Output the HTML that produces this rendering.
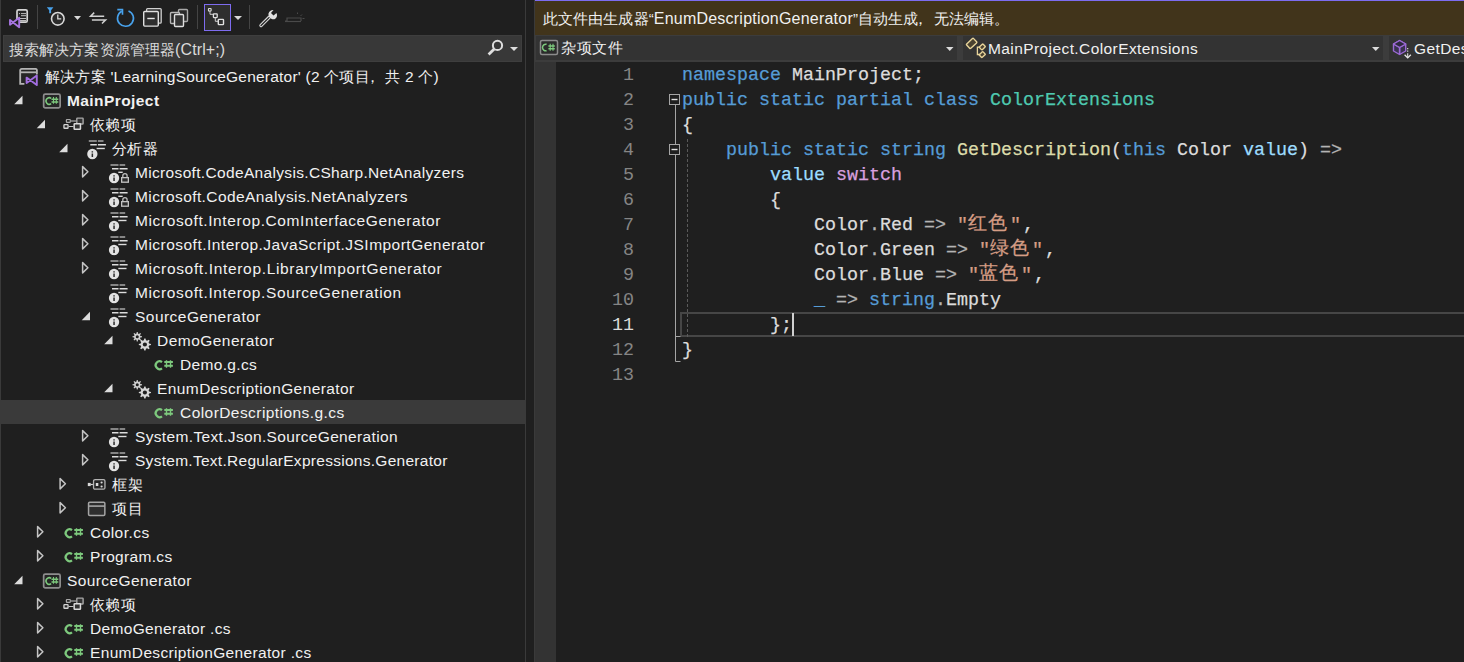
<!DOCTYPE html>
<html><head><meta charset="utf-8"><style>
*{margin:0;padding:0;box-sizing:border-box}
html,body{width:1464px;height:662px;overflow:hidden;background:#1f1f1f}
body{position:relative;font-family:"Liberation Sans", sans-serif;color:#f0f0f0}
.a{position:absolute}
.t{position:absolute;white-space:nowrap;font-size:15.5px;line-height:24px;color:#f1f1f1}
.cj{font-size:15px}
svg{position:absolute;overflow:visible}
.code{position:absolute;white-space:pre;font-family:"Liberation Mono", monospace;font-size:18.33px;line-height:25px;color:#dcdcdc;-webkit-text-stroke:0.25px currentColor}
.ln{position:absolute;white-space:pre;font-family:"Liberation Mono", monospace;font-size:18.33px;line-height:25px;color:#8e8e8e;text-align:right;width:60px}
.k{color:#569cd6} .ty{color:#4ec9b0} .m{color:#dcdcaa} .p{color:#9cdcfe} .sw{color:#d8a0df} .s{color:#d69d85}
.op{color:#b4b4b4}
.cq{position:relative;left:-2px}
.fc{position:relative;left:-5px}
.zh{font-size:19px;letter-spacing:1px;padding-right:4px;position:relative;top:-1px}
</style></head>
<body>
<div class="a" style="left:0;top:0;width:525px;height:662px;background:#1f1f1f"></div>
<div class="a" style="left:0;top:0;width:1px;height:662px;background:#3a3a3a"></div>
<div class="a" style="left:525px;top:0;width:1px;height:662px;background:#3a3a3a"></div>
<svg style="left:0;top:0" width="320" height="35">
 <!-- vs + doc -->
 <rect x="17" y="9.8" width="10.2" height="12.4" rx="1.5" fill="#262626" stroke="#d4d4d4" stroke-width="1.7"/>
 <path d="M21 13.6h5M21 15.7h5M20 18.5h6M20 20.5h6" stroke="#bdbdbd" stroke-width="1"/>
 <circle cx="19.5" cy="13.6" r="0.6" fill="#d0d0d0"/>
 <path d="M10 19.9L19.2 27.2V17.8L10 24.7z" fill="#1f1f1f" stroke="#a775e0" stroke-width="1.9" stroke-linejoin="round"/>
 <rect x="37" y="5" width="1" height="24" fill="#444"/>
 <!-- filter + clock -->
 <path d="M46.8 7.2h6.6l-2.3 3v3h-1.9v-3z" fill="#48a2ec"/>
 <circle cx="57.8" cy="18.8" r="6.3" fill="#2b2b2b" stroke="#d8d8d8" stroke-width="1.6"/>
 <path d="M57.8 14.5v4.3h3.4" fill="none" stroke="#d8d8d8" stroke-width="1.3"/>
 <path d="M74 16h7l-3.5 4z" fill="#d8d8d8"/>
 <!-- sync arrows -->
 <path d="M104.2 16.2H90.6l3.6-3.6M91.9 19.9H105.6l-3.6 3.6" fill="none" stroke="#d0d0d0" stroke-width="1.5"/>
 <!-- refresh -->
 <path d="M121.8 11.2A8 8 0 1 0 128.5 10.9" fill="none" stroke="#48a2ec" stroke-width="1.6"/>
 <path d="M117.3 9.6h5.2v5.2" fill="none" stroke="#48a2ec" stroke-width="1.6"/>
 <!-- collapse all -->
 <rect x="146.6" y="8.6" width="14.6" height="14.6" rx="1" fill="#2a2a2a" stroke="#cfcfcf" stroke-width="1.3"/>
 <rect x="143.7" y="11.5" width="14.6" height="14.6" rx="1" fill="#2e2e2e" stroke="#e0e0e0" stroke-width="1.4"/>
 <path d="M147.3 18.5h7.4" stroke="#e8e8e8" stroke-width="1.4"/>
 <!-- copy icon -->
 <rect x="178.5" y="9.5" width="9" height="12" rx="1" fill="#2a2a2a" stroke="#a8a8a8" stroke-width="1.4"/>
 <rect x="170.5" y="12.5" width="9" height="11" rx="1" fill="#262626" stroke="#b8b8b8" stroke-width="1.4"/>
 <rect x="174.5" y="14.5" width="9" height="12" rx="1" fill="#333" stroke="#e0e0e0" stroke-width="1.4"/>
 <rect x="197" y="5" width="1" height="24" fill="#444"/>
 <!-- selected button -->
 <rect x="204.5" y="4.5" width="26" height="26" fill="#2e2e2e" stroke="#7e6cf0" stroke-width="1"/>
 <rect x="208.5" y="8.5" width="2.6" height="2.6" rx="0.5" fill="none" stroke="#d8d8d8" stroke-width="1.2"/>
 <path d="M210 11.5v2.8h3" fill="none" stroke="#cfcfcf" stroke-width="1"/>
 <rect x="213.4" y="13.8" width="3.8" height="3.8" rx="0.5" fill="none" stroke="#e0e0e0" stroke-width="1.3"/>
 <path d="M215.3 17.8v3.5h3" fill="none" stroke="#cfcfcf" stroke-width="1"/>
 <rect x="218.3" y="19.4" width="5.2" height="5.2" rx="0.6" fill="none" stroke="#e0e0e0" stroke-width="1.4"/>
 <path d="M234 16h8l-4 4z" fill="#d8d8d8"/>
 <rect x="249" y="5" width="1" height="24" fill="#444"/>
 <!-- wrench -->
 <path d="M261 25.5l8.2-8.2" stroke="#d8d8d8" stroke-width="3.4" stroke-linecap="round"/>
 <path d="M261 25.5l8.2-8.2" stroke="#1f1f1f" stroke-width="1.2" stroke-linecap="round"/>
 <path d="M268.5 13.5a5 5 0 0 0 6.5 5.5 a5 5 0 0 0 1.5-6l-3 2.5-2.5-2.5 2.5-3a5 5 0 0 0-5 3.5z" fill="#e0e0e0"/>
 <!-- dim icon -->
 <path d="M285 21h2v-3h14v3" fill="none" stroke="#4a4a4a" stroke-width="1.2"/>
 <path d="M285 21.5h16" stroke="#4a4a4a" stroke-width="1.2"/>
 <path d="M297.5 12.5v1.5M302 14.5l-1.5 1.5M304.5 18.5h-2" stroke="#4a4a4a" stroke-width="1"/>
</svg>
<div class="a" style="left:3px;top:35px;width:519px;height:27px;background:#383838;border:1px solid #3e3e3e"></div>
<div class="t cj" style="left:9px;top:37px;line-height:25px;color:#dadada;letter-spacing:0.1px">搜索解决方案资源管理器<span style="font-size:16px">(Ctrl+;)</span></div>
<svg style="left:480px;top:35px" width="42" height="27">
 <circle cx="17.5" cy="10.4" r="4.6" fill="none" stroke="#dedede" stroke-width="2"/>
 <path d="M14.2 13.9L8.6 19.5" stroke="#dedede" stroke-width="2.8"/>
 <path d="M30 12h8l-4 4z" fill="#dedede"/>
</svg>
<div class="a" style="left:1px;top:400px;width:524px;height:24px;background:#3a3a3a"></div>
<div class="t" style="left:45px;top:65px;letter-spacing:0.218px"><span class="cj">解决方案</span> &#39;LearningSourceGenerator&#39; (2 <span class="cj">个项目<span class="fc">，</span>共</span> 2 <span class="cj">个</span>)</div>
<div class="t" style="left:67px;top:89px;letter-spacing:0.419px;font-weight:bold">MainProject</div>
<div class="t" style="left:90px;top:113px;letter-spacing:0.4px"><span class="cj">依赖项</span></div>
<div class="t" style="left:112px;top:137px;letter-spacing:0.4px"><span class="cj">分析器</span></div>
<div class="t" style="left:135px;top:161px;letter-spacing:0.332px">Microsoft.CodeAnalysis.CSharp.NetAnalyzers</div>
<div class="t" style="left:135px;top:185px;letter-spacing:0.417px">Microsoft.CodeAnalysis.NetAnalyzers</div>
<div class="t" style="left:135px;top:209px;letter-spacing:0.602px">Microsoft.Interop.ComInterfaceGenerator</div>
<div class="t" style="left:135px;top:233px;letter-spacing:0.479px">Microsoft.Interop.JavaScript.JSImportGenerator</div>
<div class="t" style="left:135px;top:257px;letter-spacing:0.661px">Microsoft.Interop.LibraryImportGenerator</div>
<div class="t" style="left:135px;top:281px;letter-spacing:0.624px">Microsoft.Interop.SourceGeneration</div>
<div class="t" style="left:135px;top:305px;letter-spacing:0.468px">SourceGenerator</div>
<div class="t" style="left:157px;top:329px;letter-spacing:0.472px">DemoGenerator</div>
<div class="t" style="left:180px;top:353px;letter-spacing:0.341px">Demo.g.cs</div>
<div class="t" style="left:157px;top:377px;letter-spacing:0.409px">EnumDescriptionGenerator</div>
<div class="t" style="left:180px;top:401px;letter-spacing:0.437px">ColorDescriptions.g.cs</div>
<div class="t" style="left:135px;top:425px;letter-spacing:0.342px">System.Text.Json.SourceGeneration</div>
<div class="t" style="left:135px;top:449px;letter-spacing:0.277px">System.Text.RegularExpressions.Generator</div>
<div class="t" style="left:112px;top:473px;letter-spacing:0.533px"><span class="cj">框架</span></div>
<div class="t" style="left:112px;top:497px;letter-spacing:1.066px"><span class="cj">项目</span></div>
<div class="t" style="left:90px;top:521px;letter-spacing:0.453px">Color.cs</div>
<div class="t" style="left:90px;top:545px;letter-spacing:0.326px">Program.cs</div>
<div class="t" style="left:67px;top:569px;letter-spacing:0.387px">SourceGenerator</div>
<div class="t" style="left:90px;top:593px;letter-spacing:0.4px"><span class="cj">依赖项</span></div>
<div class="t" style="left:90px;top:617px;letter-spacing:0.333px">DemoGenerator .cs</div>
<div class="t" style="left:90px;top:641px;letter-spacing:0.342px">EnumDescriptionGenerator .cs</div>
<svg style="left:0;top:0" width="525" height="662"><g><path d="M24.4 83.8H20.2V70a1.5 1.5 0 0 1 1.5-1.1h14a1.5 1.5 0 0 1 1.2 1.1V74.5" fill="#262626" stroke="#b4b4b4" stroke-width="1.8"/><path d="M20.2 72.3h16.7" stroke="#b4b4b4" stroke-width="1.8"/><path d="M26.6 77.6L36.8 85.1V75.6L26.6 83z" fill="#262626" stroke="#a26ee0" stroke-width="1.9" stroke-linejoin="round"/></g><path d="M22.50 95.8V104.3H14.20z" fill="#dcdcdc"/><g transform="translate(40.0,88)"><rect x="3.65" y="6.15" width="16.5" height="13.7" rx="1.6" fill="#262626" stroke="#8e8e8e" stroke-width="1.7"/><path d="M11.16 10.34A3.25 3.25 0 1 0 11.16 15.66" fill="none" stroke="#7dc97d" stroke-width="1.5"/><path d="M11.5 11.2h6.8M11.5 14h6.8" stroke="#7dc97d" stroke-width="1.6"/><path d="M13.5 9v6.7M16.3 9v6.7" stroke="#7dc97d" stroke-width="1.1"/></g><path d="M45.00 119.8V128.3H36.70z" fill="#dcdcdc"/><g transform="translate(62.5,112)"><path d="M6.2 14.5h4.7M8.4 9h5.2" stroke="#c8c8c8" stroke-width="1.2"/><rect x="1.45" y="12.65" width="4.1" height="3.6" rx="0.6" fill="#2a2a2a" stroke="#d4d4d4" stroke-width="1.3"/><rect x="3.9" y="7.5" width="3.9" height="2.9" rx="0.6" fill="#2a2a2a" stroke="#a8a8a8" stroke-width="1.2"/><rect x="14.3" y="6.1" width="6.3" height="5.9" rx="0.6" fill="#333" stroke="#a8a8a8" stroke-width="1.4"/><rect x="11.65" y="11.65" width="6.3" height="5.6" rx="0.6" fill="#333" stroke="#dcdcdc" stroke-width="1.5"/></g><path d="M67.50 143.8V152.3H59.20z" fill="#dcdcdc"/><g transform="translate(85.8,136)"><path d="M3 4.9h8M12.1 4.9h5.6" stroke="#a8a8a8" stroke-width="1.5"/><path d="M4.5 8.7h6.5M12.1 8.7h8" stroke="#dcdcdc" stroke-width="1.4"/><path d="M10.8 12.5h8.2" stroke="#dcdcdc" stroke-width="1.4"/><circle cx="6.55" cy="18" r="5.15" fill="#e2e2e2"/><path d="M6.55 15.2v1.4M6.55 17.4v3.6" stroke="#2a2a2a" stroke-width="1.5"/></g><path d="M82.60 166.6V176.9L87.90 171.75z" fill="none" stroke="#c4c4c4" stroke-width="1.5" stroke-linejoin="round"/><g transform="translate(107.5,160)"><path d="M3 4.9h8M12.1 4.9h5.6" stroke="#a8a8a8" stroke-width="1.5"/><path d="M4.5 8.7h6.5M12.1 8.7h8" stroke="#dcdcdc" stroke-width="1.4"/><path d="M10.8 12.3h4.4" stroke="#dcdcdc" stroke-width="1.4"/><path d="M15.3 17.6v-1.9a2.15 2.15 0 0 1 4.3 0v1.9" fill="none" stroke="#bdbdbd" stroke-width="1.3"/><rect x="14.15" y="17.65" width="6.7" height="4.55" fill="#2e2e2e" stroke="#c4c4c4" stroke-width="1.3"/><circle cx="6.55" cy="18" r="5.15" fill="#e2e2e2"/><path d="M6.55 15.2v1.4M6.55 17.4v3.6" stroke="#2a2a2a" stroke-width="1.5"/></g><path d="M82.60 190.6V200.9L87.90 195.75z" fill="none" stroke="#c4c4c4" stroke-width="1.5" stroke-linejoin="round"/><g transform="translate(107.5,184)"><path d="M3 4.9h8M12.1 4.9h5.6" stroke="#a8a8a8" stroke-width="1.5"/><path d="M4.5 8.7h6.5M12.1 8.7h8" stroke="#dcdcdc" stroke-width="1.4"/><path d="M10.8 12.3h4.4" stroke="#dcdcdc" stroke-width="1.4"/><path d="M15.3 17.6v-1.9a2.15 2.15 0 0 1 4.3 0v1.9" fill="none" stroke="#bdbdbd" stroke-width="1.3"/><rect x="14.15" y="17.65" width="6.7" height="4.55" fill="#2e2e2e" stroke="#c4c4c4" stroke-width="1.3"/><circle cx="6.55" cy="18" r="5.15" fill="#e2e2e2"/><path d="M6.55 15.2v1.4M6.55 17.4v3.6" stroke="#2a2a2a" stroke-width="1.5"/></g><path d="M82.60 214.6V224.9L87.90 219.75z" fill="none" stroke="#c4c4c4" stroke-width="1.5" stroke-linejoin="round"/><g transform="translate(107.5,208)"><path d="M3 4.9h8M12.1 4.9h5.6" stroke="#a8a8a8" stroke-width="1.5"/><path d="M4.5 8.7h6.5M12.1 8.7h8" stroke="#dcdcdc" stroke-width="1.4"/><path d="M10.8 12.5h8.2" stroke="#dcdcdc" stroke-width="1.4"/><circle cx="6.55" cy="18" r="5.15" fill="#e2e2e2"/><path d="M6.55 15.2v1.4M6.55 17.4v3.6" stroke="#2a2a2a" stroke-width="1.5"/></g><path d="M82.60 238.6V248.9L87.90 243.75z" fill="none" stroke="#c4c4c4" stroke-width="1.5" stroke-linejoin="round"/><g transform="translate(107.5,232)"><path d="M3 4.9h8M12.1 4.9h5.6" stroke="#a8a8a8" stroke-width="1.5"/><path d="M4.5 8.7h6.5M12.1 8.7h8" stroke="#dcdcdc" stroke-width="1.4"/><path d="M10.8 12.5h8.2" stroke="#dcdcdc" stroke-width="1.4"/><circle cx="6.55" cy="18" r="5.15" fill="#e2e2e2"/><path d="M6.55 15.2v1.4M6.55 17.4v3.6" stroke="#2a2a2a" stroke-width="1.5"/></g><path d="M82.60 262.6V272.9L87.90 267.75z" fill="none" stroke="#c4c4c4" stroke-width="1.5" stroke-linejoin="round"/><g transform="translate(107.5,256)"><path d="M3 4.9h8M12.1 4.9h5.6" stroke="#a8a8a8" stroke-width="1.5"/><path d="M4.5 8.7h6.5M12.1 8.7h8" stroke="#dcdcdc" stroke-width="1.4"/><path d="M10.8 12.5h8.2" stroke="#dcdcdc" stroke-width="1.4"/><circle cx="6.55" cy="18" r="5.15" fill="#e2e2e2"/><path d="M6.55 15.2v1.4M6.55 17.4v3.6" stroke="#2a2a2a" stroke-width="1.5"/></g><g transform="translate(107.5,280)"><path d="M3 4.9h8M12.1 4.9h5.6" stroke="#a8a8a8" stroke-width="1.5"/><path d="M4.5 8.7h6.5M12.1 8.7h8" stroke="#dcdcdc" stroke-width="1.4"/><path d="M10.8 12.5h8.2" stroke="#dcdcdc" stroke-width="1.4"/><circle cx="6.55" cy="18" r="5.15" fill="#e2e2e2"/><path d="M6.55 15.2v1.4M6.55 17.4v3.6" stroke="#2a2a2a" stroke-width="1.5"/></g><path d="M90.00 311.8V320.3H81.70z" fill="#dcdcdc"/><g transform="translate(107.5,304)"><path d="M3 4.9h8M12.1 4.9h5.6" stroke="#a8a8a8" stroke-width="1.5"/><path d="M4.5 8.7h6.5M12.1 8.7h8" stroke="#dcdcdc" stroke-width="1.4"/><path d="M10.8 12.5h8.2" stroke="#dcdcdc" stroke-width="1.4"/><circle cx="6.55" cy="18" r="5.15" fill="#e2e2e2"/><path d="M6.55 15.2v1.4M6.55 17.4v3.6" stroke="#2a2a2a" stroke-width="1.5"/></g><path d="M112.50 335.8V344.3H104.20z" fill="#dcdcdc"/><g transform="translate(130.0,328)"><polygon points="6.76,3.92 7.74,3.92 8.05,5.60 8.88,5.95 10.28,4.98 10.97,5.67 10.00,7.07 10.35,7.90 12.03,8.21 12.03,9.19 10.35,9.50 10.00,10.33 10.97,11.73 10.28,12.42 8.88,11.45 8.05,11.80 7.74,13.48 6.76,13.48 6.45,11.80 5.62,11.45 4.22,12.42 3.53,11.73 4.50,10.33 4.15,9.50 2.47,9.19 2.47,8.21 4.15,7.90 4.50,7.07 3.53,5.67 4.22,4.98 5.62,5.95 6.45,5.60" fill="#d0d0d0"/><circle cx="7.25" cy="8.7" r="1.5" fill="#1f1f1f"/><polygon points="14.28,10.43 15.52,10.43 15.97,12.34 17.09,12.80 18.75,11.77 19.63,12.65 18.60,14.31 19.06,15.43 20.97,15.88 20.97,17.12 19.06,17.57 18.60,18.69 19.63,20.35 18.75,21.23 17.09,20.20 15.97,20.66 15.52,22.57 14.28,22.57 13.83,20.66 12.71,20.20 11.05,21.23 10.17,20.35 11.20,18.69 10.74,17.57 8.83,17.12 8.83,15.88 10.74,15.43 11.20,14.31 10.17,12.65 11.05,11.77 12.71,12.80 13.83,12.34" fill="#d6d6d6"/><circle cx="14.9" cy="16.5" r="2.1" fill="#1f1f1f"/></g><g transform="translate(152.5,352)"><path d="M9.50 10.13A3.9 3.9 0 1 0 9.50 16.27" fill="none" stroke="#7dc97d" stroke-width="2.2"/><path d="M11.8 9.9h8.6M11.8 13.7h8.6" stroke="#7dc97d" stroke-width="2"/><path d="M14 8.3v7.5M18 8.3v7.5" stroke="#7dc97d" stroke-width="1.4"/></g><path d="M112.50 383.8V392.3H104.20z" fill="#dcdcdc"/><g transform="translate(130.0,376)"><polygon points="6.76,3.92 7.74,3.92 8.05,5.60 8.88,5.95 10.28,4.98 10.97,5.67 10.00,7.07 10.35,7.90 12.03,8.21 12.03,9.19 10.35,9.50 10.00,10.33 10.97,11.73 10.28,12.42 8.88,11.45 8.05,11.80 7.74,13.48 6.76,13.48 6.45,11.80 5.62,11.45 4.22,12.42 3.53,11.73 4.50,10.33 4.15,9.50 2.47,9.19 2.47,8.21 4.15,7.90 4.50,7.07 3.53,5.67 4.22,4.98 5.62,5.95 6.45,5.60" fill="#d0d0d0"/><circle cx="7.25" cy="8.7" r="1.5" fill="#1f1f1f"/><polygon points="14.28,10.43 15.52,10.43 15.97,12.34 17.09,12.80 18.75,11.77 19.63,12.65 18.60,14.31 19.06,15.43 20.97,15.88 20.97,17.12 19.06,17.57 18.60,18.69 19.63,20.35 18.75,21.23 17.09,20.20 15.97,20.66 15.52,22.57 14.28,22.57 13.83,20.66 12.71,20.20 11.05,21.23 10.17,20.35 11.20,18.69 10.74,17.57 8.83,17.12 8.83,15.88 10.74,15.43 11.20,14.31 10.17,12.65 11.05,11.77 12.71,12.80 13.83,12.34" fill="#d6d6d6"/><circle cx="14.9" cy="16.5" r="2.1" fill="#1f1f1f"/></g><g transform="translate(152.5,400)"><path d="M9.50 10.13A3.9 3.9 0 1 0 9.50 16.27" fill="none" stroke="#7dc97d" stroke-width="2.2"/><path d="M11.8 9.9h8.6M11.8 13.7h8.6" stroke="#7dc97d" stroke-width="2"/><path d="M14 8.3v7.5M18 8.3v7.5" stroke="#7dc97d" stroke-width="1.4"/></g><path d="M82.60 430.6V440.9L87.90 435.75z" fill="none" stroke="#c4c4c4" stroke-width="1.5" stroke-linejoin="round"/><g transform="translate(107.5,424)"><path d="M3 4.9h8M12.1 4.9h5.6" stroke="#a8a8a8" stroke-width="1.5"/><path d="M4.5 8.7h6.5M12.1 8.7h8" stroke="#dcdcdc" stroke-width="1.4"/><path d="M10.8 12.5h8.2" stroke="#dcdcdc" stroke-width="1.4"/><circle cx="6.55" cy="18" r="5.15" fill="#e2e2e2"/><path d="M6.55 15.2v1.4M6.55 17.4v3.6" stroke="#2a2a2a" stroke-width="1.5"/></g><path d="M82.60 454.6V464.9L87.90 459.75z" fill="none" stroke="#c4c4c4" stroke-width="1.5" stroke-linejoin="round"/><g transform="translate(107.5,448)"><path d="M3 4.9h8M12.1 4.9h5.6" stroke="#a8a8a8" stroke-width="1.5"/><path d="M4.5 8.7h6.5M12.1 8.7h8" stroke="#dcdcdc" stroke-width="1.4"/><path d="M10.8 12.5h8.2" stroke="#dcdcdc" stroke-width="1.4"/><circle cx="6.55" cy="18" r="5.15" fill="#e2e2e2"/><path d="M6.55 15.2v1.4M6.55 17.4v3.6" stroke="#2a2a2a" stroke-width="1.5"/></g><path d="M60.10 478.6V488.9L65.40 483.75z" fill="none" stroke="#c4c4c4" stroke-width="1.5" stroke-linejoin="round"/><g transform="translate(85.0,472)"><rect x="8.55" y="7.55" width="11.4" height="9.6" rx="1.5" fill="#262626" stroke="#b4b4b4" stroke-width="1.3"/><rect x="2.8" y="10.9" width="2.9" height="3.2" fill="#d8d8d8"/><path d="M5.5 12.5h2.4" stroke="#d8d8d8" stroke-width="1.2"/><rect x="10.8" y="11" width="2.5" height="3" fill="#dcdcdc"/><circle cx="16.6" cy="10.5" r="1.1" fill="#dcdcdc"/><circle cx="16.6" cy="14.5" r="1.1" fill="#dcdcdc"/></g><path d="M60.10 502.6V512.9L65.40 507.75z" fill="none" stroke="#c4c4c4" stroke-width="1.5" stroke-linejoin="round"/><g transform="translate(85.0,496)"><rect x="3.55" y="6.15" width="16.3" height="13.3" rx="1.2" fill="#2e2e2e" stroke="#a4a4a4" stroke-width="1.5"/><path d="M3.55 10.1h16.3" stroke="#a4a4a4" stroke-width="1.6"/></g><path d="M37.60 526.6V536.9L42.90 531.75z" fill="none" stroke="#c4c4c4" stroke-width="1.5" stroke-linejoin="round"/><g transform="translate(62.5,520)"><path d="M9.50 10.13A3.9 3.9 0 1 0 9.50 16.27" fill="none" stroke="#7dc97d" stroke-width="2.2"/><path d="M11.8 9.9h8.6M11.8 13.7h8.6" stroke="#7dc97d" stroke-width="2"/><path d="M14 8.3v7.5M18 8.3v7.5" stroke="#7dc97d" stroke-width="1.4"/></g><path d="M37.60 550.6V560.9L42.90 555.75z" fill="none" stroke="#c4c4c4" stroke-width="1.5" stroke-linejoin="round"/><g transform="translate(62.5,544)"><path d="M9.50 10.13A3.9 3.9 0 1 0 9.50 16.27" fill="none" stroke="#7dc97d" stroke-width="2.2"/><path d="M11.8 9.9h8.6M11.8 13.7h8.6" stroke="#7dc97d" stroke-width="2"/><path d="M14 8.3v7.5M18 8.3v7.5" stroke="#7dc97d" stroke-width="1.4"/></g><path d="M22.50 575.8V584.3H14.20z" fill="#dcdcdc"/><g transform="translate(40.0,568)"><rect x="3.65" y="6.15" width="16.5" height="13.7" rx="1.6" fill="#262626" stroke="#8e8e8e" stroke-width="1.7"/><path d="M11.16 10.34A3.25 3.25 0 1 0 11.16 15.66" fill="none" stroke="#7dc97d" stroke-width="1.5"/><path d="M11.5 11.2h6.8M11.5 14h6.8" stroke="#7dc97d" stroke-width="1.6"/><path d="M13.5 9v6.7M16.3 9v6.7" stroke="#7dc97d" stroke-width="1.1"/></g><path d="M37.60 598.6V608.9L42.90 603.75z" fill="none" stroke="#c4c4c4" stroke-width="1.5" stroke-linejoin="round"/><g transform="translate(62.5,592)"><path d="M6.2 14.5h4.7M8.4 9h5.2" stroke="#c8c8c8" stroke-width="1.2"/><rect x="1.45" y="12.65" width="4.1" height="3.6" rx="0.6" fill="#2a2a2a" stroke="#d4d4d4" stroke-width="1.3"/><rect x="3.9" y="7.5" width="3.9" height="2.9" rx="0.6" fill="#2a2a2a" stroke="#a8a8a8" stroke-width="1.2"/><rect x="14.3" y="6.1" width="6.3" height="5.9" rx="0.6" fill="#333" stroke="#a8a8a8" stroke-width="1.4"/><rect x="11.65" y="11.65" width="6.3" height="5.6" rx="0.6" fill="#333" stroke="#dcdcdc" stroke-width="1.5"/></g><path d="M37.60 622.6V632.9L42.90 627.75z" fill="none" stroke="#c4c4c4" stroke-width="1.5" stroke-linejoin="round"/><g transform="translate(62.5,616)"><path d="M9.50 10.13A3.9 3.9 0 1 0 9.50 16.27" fill="none" stroke="#7dc97d" stroke-width="2.2"/><path d="M11.8 9.9h8.6M11.8 13.7h8.6" stroke="#7dc97d" stroke-width="2"/><path d="M14 8.3v7.5M18 8.3v7.5" stroke="#7dc97d" stroke-width="1.4"/></g><path d="M37.60 646.6V656.9L42.90 651.75z" fill="none" stroke="#c4c4c4" stroke-width="1.5" stroke-linejoin="round"/><g transform="translate(62.5,640)"><path d="M9.50 10.13A3.9 3.9 0 1 0 9.50 16.27" fill="none" stroke="#7dc97d" stroke-width="2.2"/><path d="M11.8 9.9h8.6M11.8 13.7h8.6" stroke="#7dc97d" stroke-width="2"/><path d="M14 8.3v7.5M18 8.3v7.5" stroke="#7dc97d" stroke-width="1.4"/></g></svg>
<div class="a" style="left:535px;top:0;width:929px;height:1px;background:#7c6cf0"></div>
<div class="a" style="left:535px;top:1px;width:929px;height:34px;background:#41341b"></div>
<div class="t cj" style="left:543px;top:7px;color:#f0f0f0;letter-spacing:0.1px">此文件由生成器“<span style="font-size:16px;letter-spacing:0.22px">EnumDescriptionGenerator</span>”自动生成<span class="fc">，</span>无法编辑。</div>
<div class="a" style="left:535px;top:35px;width:929px;height:27px;background:#3c3c3c"></div>
<div class="a" style="left:536px;top:36px;width:421px;height:24px;background:#333"></div>
<div class="a" style="left:963px;top:36px;width:420px;height:24px;background:#333"></div>
<div class="a" style="left:1389px;top:36px;width:75px;height:24px;background:#333"></div>
<svg style="left:535px;top:35px" width="929" height="27">
 <rect x="5.5" y="5.5" width="17" height="14" rx="1.5" fill="#2b2b2b" stroke="#8c8c8c" stroke-width="1.5"/>
 <path d="M11.6 9.3A3.3 3.3 0 1 0 11.6 15.7" fill="none" stroke="#7dc97d" stroke-width="1.5"/>
 <path d="M13.4 11h6.4M13.4 13.8h6.4" stroke="#7dc97d" stroke-width="1.6"/><path d="M15.2 8.8v7M18 8.8v7" stroke="#7dc97d" stroke-width="1.1"/>
 <path d="M411 12h7.5l-3.75 4z" fill="#dcdcdc"/>
 <path d="M837 12h7.5l-3.75 4z" fill="#dcdcdc"/>
 <path d="M442.4 11.5v8h3.5M442.4 12.2h3" fill="none" stroke="#e8d49a" stroke-width="1.3"/>
 <g fill="#4a4230" stroke="#e8d49a" stroke-width="1.4">
  <rect x="431.9" y="5.5" width="9.5" height="6" rx="0.8" transform="rotate(-43 436.6 8.5)"/>
  <rect x="444.8" y="9.9" width="5" height="4" rx="0.6" transform="rotate(-43 447.3 11.9)"/>
  <rect x="444.8" y="17.6" width="5" height="4" rx="0.6" transform="rotate(-43 447.3 19.6)"/>
 </g>
 <g stroke="#9c6ad6" stroke-width="1.4" fill="#3a3350" stroke-linejoin="round">
  <path d="M858.5 9L864.6 5.5 870.7 9V16L864.6 19.5 858.5 16z"/>
  <path d="M858.5 9L864.6 12.5 870.7 9M864.6 12.5V19.5" fill="none"/>
 </g>
 <path d="M864.6 5.5L870.7 9 864.6 12.5 858.5 9z" fill="#2f2a40"/>
 <path d="M858.5 9L864.6 5.5 870.7 9 864.6 12.5z M864.6 12.5V19.5" fill="none" stroke="#9c6ad6" stroke-width="1.4" stroke-linejoin="round"/>
 <path d="M872.7 13v1.2M872.7 15.6v1.2M872.7 18.2v4" stroke="#e0e0e0" stroke-width="1.1"/>
 <path d="M869.6 19.8l3.1 3.1 3.1-3.1" fill="none" stroke="#e8e8e8" stroke-width="1.3"/>
</svg>
<div class="t cj" style="left:561px;top:36px;color:#f0f0f0;letter-spacing:0.67px">杂项文件</div>
<div class="t" style="left:988px;top:37px;color:#f0f0f0;letter-spacing:0.41px">MainProject.ColorExtensions</div>
<div class="t" style="left:1414px;top:37px;color:#f0f0f0;letter-spacing:0.4px">GetDescription</div>
<div class="a" style="left:534px;top:0;width:1px;height:662px;background:#3a3a3a"></div>
<div class="a" style="left:535px;top:62px;width:929px;height:600px;background:#1f1f1f"></div>
<div class="a" style="left:535px;top:62px;width:21px;height:600px;background:#333"></div>
<div class="a" style="left:680px;top:312px;width:784px;height:25px;border:2px solid #464646;border-right:none"></div>
<div class="ln" style="left:574px;top:63px;color:#858585">1</div>
<div class="ln" style="left:574px;top:88px;color:#858585">2</div>
<div class="ln" style="left:574px;top:113px;color:#858585">3</div>
<div class="ln" style="left:574px;top:138px;color:#858585">4</div>
<div class="ln" style="left:574px;top:163px;color:#858585">5</div>
<div class="ln" style="left:574px;top:188px;color:#858585">6</div>
<div class="ln" style="left:574px;top:213px;color:#858585">7</div>
<div class="ln" style="left:574px;top:238px;color:#858585">8</div>
<div class="ln" style="left:574px;top:263px;color:#858585">9</div>
<div class="ln" style="left:574px;top:288px;color:#858585">10</div>
<div class="ln" style="left:574px;top:313px;color:#dcdcdc">11</div>
<div class="ln" style="left:574px;top:338px;color:#858585">12</div>
<div class="ln" style="left:574px;top:363px;color:#858585">13</div>
<svg style="left:660px;top:62px" width="40" height="600">
 <rect x="9.5" y="32.5" width="10" height="10" fill="#1f1f1f" stroke="#a5a5a5" stroke-width="1"/>
 <path d="M11.5 37.5h6" stroke="#e0e0e0" stroke-width="1.4"/>
 <path d="M15.5 43v39" stroke="#a5a5a5" stroke-width="1"/>
 <rect x="9.5" y="82.5" width="10" height="10" fill="#1f1f1f" stroke="#a5a5a5" stroke-width="1"/>
 <path d="M11.5 87.5h6" stroke="#e0e0e0" stroke-width="1.4"/>
 <path d="M15.5 93v206.5h5M15.5 274.5h5" fill="none" stroke="#a5a5a5" stroke-width="1"/>
 <path d="M27.5 77v198" stroke="#5a5a5a" stroke-width="1" stroke-dasharray="3 2"/>
</svg>
<div class="code" style="left:682px;top:63px"><span class="k">namespace</span> MainProject;</div>
<div class="code" style="left:682px;top:88px"><span class="k">public</span> <span class="k">static</span> <span class="k">partial</span> <span class="k">class</span> <span class="ty">ColorExtensions</span></div>
<div class="code" style="left:682px;top:113px">{</div>
<div class="code" style="left:682px;top:138px">    <span class="k">public</span> <span class="k">static</span> <span class="k">string</span> <span class="m">GetDescription</span>(<span class="k">this</span> Color <span class="p">value</span>) <span class="op">=&gt;</span></div>
<div class="code" style="left:682px;top:163px">        <span class="p">value</span> <span class="sw">switch</span></div>
<div class="code" style="left:682px;top:188px">        {</div>
<div class="code" style="left:682px;top:213px">            Color<span class="op">.</span>Red <span class="op">=&gt;</span> <span class="s">"<span class="zh">红色</span><span class="cq">"</span></span>,</div>
<div class="code" style="left:682px;top:238px">            Color<span class="op">.</span>Green <span class="op">=&gt;</span> <span class="s">"<span class="zh">绿色</span><span class="cq">"</span></span>,</div>
<div class="code" style="left:682px;top:263px">            Color<span class="op">.</span>Blue <span class="op">=&gt;</span> <span class="s">"<span class="zh">蓝色</span><span class="cq">"</span></span>,</div>
<div class="code" style="left:682px;top:288px">            <span class="k">_</span> <span class="op">=&gt;</span> <span class="k">string</span><span class="op">.</span>Empty</div>
<div class="code" style="left:682px;top:313px">        };</div>
<div class="code" style="left:682px;top:338px">}</div>
<div class="code" style="left:682px;top:363px"></div>
<div class="a" style="left:792px;top:313px;width:2px;height:23px;background:#d0d0d0"></div>
</body></html>
